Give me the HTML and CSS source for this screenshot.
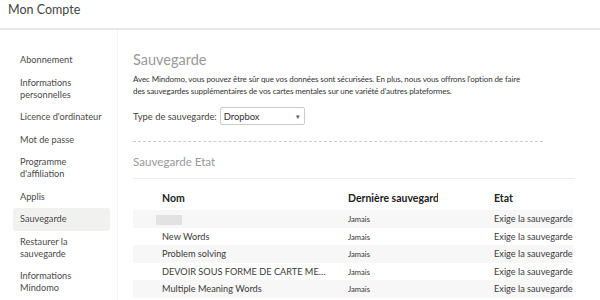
FILE: index.html
```html
<!DOCTYPE html>
<html lang="fr">
<head>
    <meta charset="UTF-8">
    <title>Mon Compte</title>
    <link rel="stylesheet" href="styles.css">
</head>
<body>
    <!-- En-tête -->
    <div class="top">Mon Compte</div>

    <div class="layout">
        <!-- Menu latéral -->
        <ul class="sidebar">
            <li>Abonnement</li>
            <li>Informations<br>personnelles</li>
            <li>Licence d'ordinateur</li>
            <li>Mot de passe</li>
            <li>Programme<br>d'affiliation</li>
            <li>Applis</li>
            <li class="active">Sauvegarde</li>
            <li>Restaurer la<br>sauvegarde</li>
            <li>Informations<br>Mindomo</li>
        </ul>

        <!-- Contenu -->
        <div class="main">
            <h2>Sauvegarde</h2>
            <p class="desc">Avec Mindomo, vous pouvez être sûr que vos données sont sécurisées. En plus, nous vous offrons l'option de faire des sauvegardes supplémentaires de vos cartes mentales sur une variété d'autres plateformes.</p>

            <div class="type-row">
                <label for="backupType">Type de sauvegarde:</label>
                <div class="select" id="backupType">
                    <span>Dropbox</span>
                    <span class="arrow">&#9662;</span>
                </div>
            </div>

            <h3>Sauvegarde Etat</h3>

            <table class="status">
                <colgroup>
                    <col class="c-name">
                    <col class="c-date">
                    <col class="c-state">
                </colgroup>
                <thead>
                    <tr>
                        <th>Nom</th>
                        <th><div class="clip">Dernière sauvegarde</div></th>
                        <th>Etat</th>
                    </tr>
                </thead>
                <tbody>
                    <tr>
                        <td><span class="blur"></span></td>
                        <td class="date">Jamais</td>
                        <td>Exige la sauvegarde</td>
                    </tr>
                    <tr>
                        <td>New Words</td>
                        <td class="date">Jamais</td>
                        <td>Exige la sauvegarde</td>
                    </tr>
                    <tr>
                        <td>Problem solving</td>
                        <td class="date">Jamais</td>
                        <td>Exige la sauvegarde</td>
                    </tr>
                    <tr>
                        <td>DEVOIR SOUS FORME DE CARTE MENTALE</td>
                        <td class="date">Jamais</td>
                        <td>Exige la sauvegarde</td>
                    </tr>
                    <tr>
                        <td>Multiple Meaning Words</td>
                        <td class="date">Jamais</td>
                        <td>Exige la sauvegarde</td>
                    </tr>
                </tbody>
            </table>
        </div>
    </div>
</body>
</html>
```

FILE: styles.css
```css
/* Base */
body {
    margin: 0;
    font-family: Lato, "Open Sans", sans-serif;
    color: #333;
    background: #fff;
    overflow: hidden;
}

/* En-tête */
.top {
    height: 28px;
    line-height: 20px;
    padding-left: 8px;
    font-size: 12.5px;
    color: #444;
    border-bottom: 2px solid #e8e8e8;
}

.layout {
    display: flex;
}

/* Menu latéral */
.sidebar {
    list-style: none;
    margin: 0;
    padding: 19px 7px 0 13px;
    width: 97px;
    border-right: 1px solid #f3f3f3;
    min-height: 280px;
}
.sidebar li {
    font-size: 9.2px;
    line-height: 12px;
    color: #4a4a4a;
    padding: 5px 7px 5.5px;
    border-radius: 3px;
    white-space: nowrap;
}
.sidebar li.active {
    background: #f1f1ef;
}

/* Contenu */
.main {
    padding: 20px 0 0 15px;
    width: 442px;
}
h2 {
    margin: 0;
    font-size: 14.5px;
    line-height: 20px;
    font-weight: normal;
    color: #999;
}
.desc {
    margin: 3px 0 0;
    font-size: 8px;
    letter-spacing: -0.1px;
    line-height: 12px;
    color: #333;
    width: 392px;
}

.type-row {
    display: flex;
    align-items: center;
    gap: 3px;
    height: 18px;
    margin-top: 10px;
    padding-bottom: 16px;
    border-bottom: 1px dashed #ccc;
    width: 410px;
    font-size: 9.4px;
    color: #444;
}
.select {
    display: flex;
    justify-content: space-between;
    align-items: center;
    width: 76px;
    height: 16px;
    padding: 0 4px 0 3px;
    border: 1px solid #ccc;
    border-radius: 2px;
    color: #333;
}
.select .arrow {
    font-size: 7px;
    color: #555;
}

h3 {
    margin: 0;
    padding: 12px 0 8px;
    font-size: 11.6px;
    line-height: 16px;
    font-weight: normal;
    color: #999;
    border-bottom: 1px solid #eee;
}

/* Tableau */
.status {
    width: 440px;
    table-layout: fixed;
    border-collapse: collapse;
}
.c-name { width: 207px; }
.c-date { width: 146px; }
.c-state { width: 87px; }

.status th {
    text-align: left;
    font-size: 10.5px;
    font-weight: bold;
    color: #222;
    line-height: 14px;
    padding: 12px 8px 5px;
    white-space: nowrap;
    overflow: hidden;
}
.status th .clip {
    width: 90px;
    overflow: hidden;
}
.status th:first-child,
.status td:first-child {
    padding-left: 29px;
}
.status tbody tr {
    height: 17.5px;
}
.status td {
    line-height: 17.5px;
    padding: 0 8px;
    font-size: 9.2px;
    color: #3a3a3a;
    white-space: nowrap;
    overflow: hidden;
    text-overflow: ellipsis;
}
.status td:last-child {
    text-overflow: clip;
    padding-right: 0;
}
.status tbody tr:nth-child(odd) {
    background: #f7f7f7;
}
.status td.date {
    font-size: 7.6px;
    color: #333;
    padding-top: 2px;
    line-height: 15.5px;
}
.blur {
    display: inline-block;
    width: 26px;
    height: 10px;
    margin-left: -6px;
    background: #e2e2e2;
    vertical-align: middle;
}
```
